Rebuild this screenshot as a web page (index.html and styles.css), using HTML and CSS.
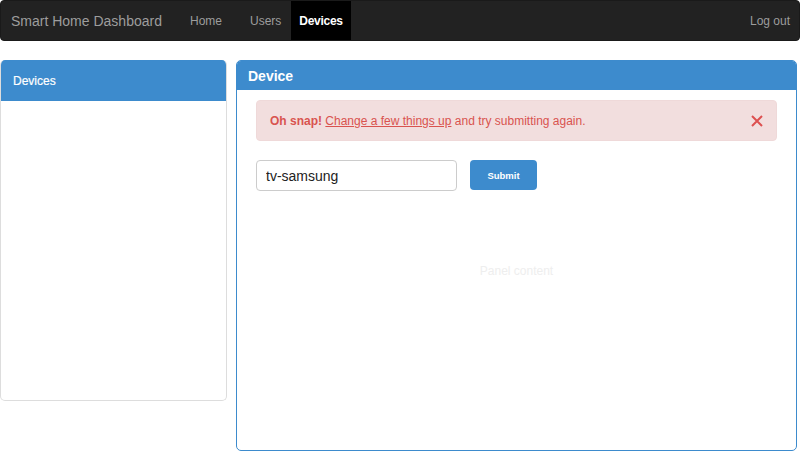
FILE: index.html
```html
<!DOCTYPE html>
<html>
<head>
<meta charset="utf-8">
<link rel="stylesheet" href="styles.css">
</head>
<body>
<nav class="navbar">
  <div class="brand">Smart Home Dashboard</div>
  <ul class="nav">
    <li><a>Home</a></li>
    <li><a>Users</a></li>
    <li class="active"><a>Devices</a></li>
  </ul>
  <div class="nav-right"><a>Log out</a></div>
</nav>
<main class="main">
  <section class="panel side">
    <div class="side-head">Devices</div>
    <div class="side-body"></div>
  </section>
  <section class="panel device">
    <div class="device-head">Device</div>
    <div class="device-body">
      <div class="alert">
        <span><strong>Oh snap!</strong> <a class="alert-link">Change a few things up</a> and try submitting again.</span>
        <svg class="close" width="14" height="14" viewBox="0 0 14 14"><path d="M2 2 L12 12 M12 2 L2 12" stroke="#dd5050" stroke-width="2" fill="none"/></svg>
      </div>
      <form class="form">
        <input class="input" type="text" value="tv-samsung">
        <button class="btn" type="button">Submit</button>
      </form>
      <div class="placeholder">Panel content</div>
    </div>
  </section>
</main>
</body>
</html>
```
FILE: styles.css
```css
* { box-sizing: border-box; }
html, body { margin: 0; padding: 0; background: #fff; }
body { font-family: "Liberation Sans", Arial, sans-serif; width: 801px; height: 451px; overflow: hidden; }

.navbar {
  display: flex;
  align-items: stretch;
  height: 41px;
  width: 800px;
  background: #222;
  border: 1px solid #1a1a1a;
  border-radius: 4px;
}
.brand {
  display: flex;
  align-items: center;
  padding: 0 10px 0 10px;
  font-size: 14px;
  color: #9d9d9d;
  width: 181px;
}
.nav { display: flex; list-style: none; margin: 0; padding: 0; }
.nav li { display: flex; }
.nav a {
  display: flex;
  align-items: center;
  padding: 0 8px;
  font-size: 12px;
  color: #9d9d9d;
}
.nav li:nth-child(2) a { margin-left: 12px; }
.nav li.active a { background: #000; color: #fff; font-weight: bold; letter-spacing: -0.3px; margin-left: 2px; padding: 0 8px 0 8px; }
.nav-right { margin-left: auto; display: flex; align-items: center; padding-right: 9px; }
.nav-right a { font-size: 12px; color: #9d9d9d; }

.main {
  display: flex;
  gap: 9px;
  padding: 19px 4px 0 0;
  align-items: flex-start;
}
.panel { border-radius: 5px; overflow: hidden; }
.side {
  width: 227px;
  height: 341px;
  border: 1px solid #ddd;
  border-top: none;
}
.side-head {
  height: 41px;
  background: #3d8bcd;
  color: #fff;
  font-size: 12px;
  display: flex;
  align-items: center;
  margin: 0 -1px;
  padding-left: 13px;
  -webkit-text-stroke: 0.2px #fff;
}
.device {
  width: 561px;
  height: 391px;
  border: 1px solid #3d8bcd;
  display: flex;
  flex-direction: column;
}
.device-head {
  height: 29px;
  background: #3d8bcd;
  color: #fff;
  font-size: 14px;
  font-weight: bold;
  display: flex;
  align-items: center;
  padding-left: 11px;
}
.device-body {
  flex: 1;
  padding: 10px 19px 0 19px;
  display: flex;
  flex-direction: column;
}
.alert {
  height: 41px;
  background: #f2dede;
  border: 1px solid #efd9d9;
  border-radius: 4px;
  display: flex;
  align-items: center;
  justify-content: space-between;
  padding: 0 12px 0 13px;
  font-size: 12px;
  color: #d9534f;
}
.alert strong { font-weight: bold; }
.alert-link { text-decoration: underline; color: #d9534f; }
.close { display: block; }
.form { display: flex; gap: 13px; margin-top: 19px; align-items: flex-start; }
.input {
  width: 201px;
  height: 31px;
  border: 1px solid #ccc;
  border-radius: 4px;
  padding: 0 9px;
  font-family: "Liberation Sans", Arial, sans-serif;
  font-size: 14px;
  color: #222;
}
.btn {
  width: 67px;
  height: 30px;
  background: #3d8bcd;
  color: #fff;
  border: none;
  border-radius: 4px;
  font-family: "Liberation Sans", Arial, sans-serif;
  font-size: 9.5px;
  font-weight: bold;
  padding: 0;
}
.placeholder {
  margin-top: 73px;
  text-align: center;
  font-size: 12px;
  color: #eee;
}
```
